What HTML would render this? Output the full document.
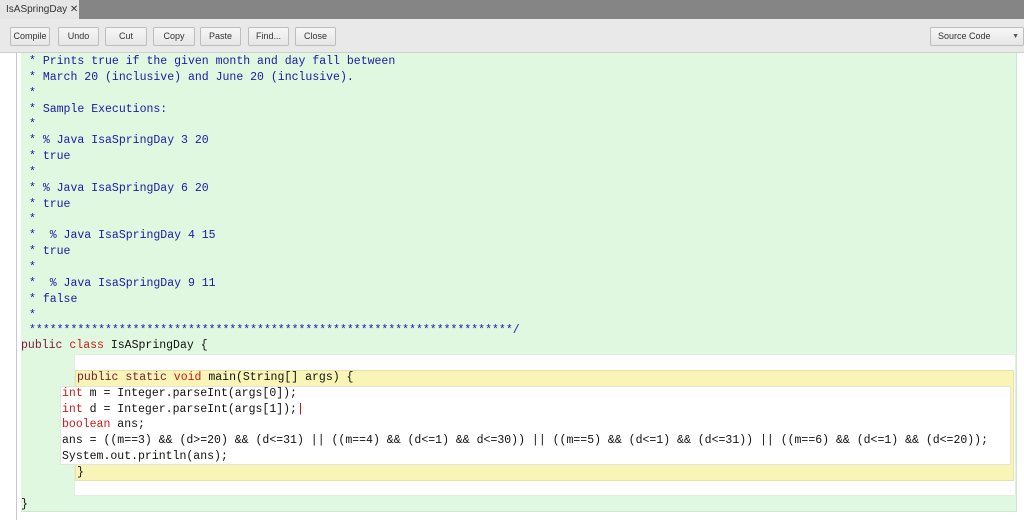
<!DOCTYPE html>
<html><head><meta charset="utf-8"><style>
*{margin:0;padding:0;box-sizing:border-box}
body{width:1024px;height:520px;background:#fff;position:relative;overflow:hidden;font-family:"Liberation Sans",sans-serif}
.tabbar{position:absolute;left:0;top:0;width:1024px;height:19px;background:#858585}
.tab{position:absolute;left:0;top:0;width:79px;height:19px;background:#e6e6e6;font-size:10px;color:#333;padding:4px 0 0 6px}
.tool{position:absolute;left:0;top:19px;width:1024px;height:34px;background:#e9e9e9;border-bottom:1px solid #cfcfcf}
.btn{position:absolute;top:8px;height:19px;border:1px solid #bdbdbd;border-radius:2px;background:linear-gradient(#f7f7f7,#e6e6e6);font-size:9px;color:#333;text-align:center;line-height:17px}
.vl{position:absolute;left:16px;top:53px;width:1px;height:467px;background:#c8c8c8}
.green{position:absolute;left:21px;top:53px;width:996px;height:459px;background:#e0f7e0;border-right:1px solid #d0e6d0;border-bottom:1px solid #d0e6d0}
.wbox{position:absolute;left:74px;top:354px;width:942px;height:142px;background:#fff;border:1px solid #e4ece4}
.ybox{position:absolute;left:75px;top:370px;width:939px;height:111px;background:#f8f5b6;border:1px solid #e6e2a8}
.ibox{position:absolute;left:60px;top:386px;width:951px;height:79px;background:#fff;border:1px solid #e4e4d8}
.l{position:absolute;font-family:"Liberation Mono",monospace;font-size:11.52px;white-space:pre;line-height:14px;color:#111}
.c{color:#1a1aa6;line-height:15.85px}
.k{color:#7a1a3a}
.r{color:#cc1a1a}
</style></head><body>
<div class="tabbar"><div class="tab">IsASpringDay ✕</div></div>
<div class="tool">
<div class="btn" style="left:10px;width:40px">Compile</div>
<div class="btn" style="left:58px;width:41px">Undo</div>
<div class="btn" style="left:105px;width:42px">Cut</div>
<div class="btn" style="left:153px;width:42px">Copy</div>
<div class="btn" style="left:200px;width:41px">Paste</div>
<div class="btn" style="left:248px;width:41px">Find...</div>
<div class="btn" style="left:295px;width:41px">Close</div>
<div class="btn" style="left:930px;width:94px;text-align:left;padding-left:7px">Source Code<span style="position:absolute;right:4px;font-size:7px;color:#555">▼</span></div>
</div>
<div class="vl"></div>
<div class="green"></div>
<div class="wbox"></div>
<div class="ybox"></div>
<div class="ibox"></div>
<div class="l c" style="left:29px;top:54px">* Prints true if the given month and day fall between
* March 20 (inclusive) and June 20 (inclusive).
*
* Sample Executions:
*
* % Java IsaSpringDay 3 20
* true
*
* % Java IsaSpringDay 6 20
* true
*
*  % Java IsaSpringDay 4 15
* true
*
*  % Java IsaSpringDay 9 11
* false
*
**********************************************************************/</div>
<div class="l" style="left:21px;top:339px"><span class="k">public</span> <span class="r">class</span> IsASpringDay {</div>
<div class="l" style="left:77px;top:371px"><span class="k">public</span> <span class="k">static</span> <span class="r">void</span> main(String[] args) {</div>
<div class="l" style="left:62px;top:387px"><span class="r">int</span> m = Integer.parseInt(args[0]);</div>
<div class="l" style="left:62px;top:403px"><span class="r">int</span> d = Integer.parseInt(args[1]);<span style="color:#c00">|</span></div>
<div class="l" style="left:62px;top:418px"><span class="r">boolean</span> ans;</div>
<div class="l" style="left:62px;top:434px">ans = ((m==3) &amp;&amp; (d&gt;=20) &amp;&amp; (d&lt;=31) || ((m==4) &amp;&amp; (d&lt;=1) &amp;&amp; d&lt;=30)) || ((m==5) &amp;&amp; (d&lt;=1) &amp;&amp; (d&lt;=31)) || ((m==6) &amp;&amp; (d&lt;=1) &amp;&amp; (d&lt;=20));</div>
<div class="l" style="left:62px;top:450px">System.out.println(ans);</div>
<div class="l" style="left:77px;top:466px">}</div>
<div class="l" style="left:21px;top:498px">}</div>
</body></html>
